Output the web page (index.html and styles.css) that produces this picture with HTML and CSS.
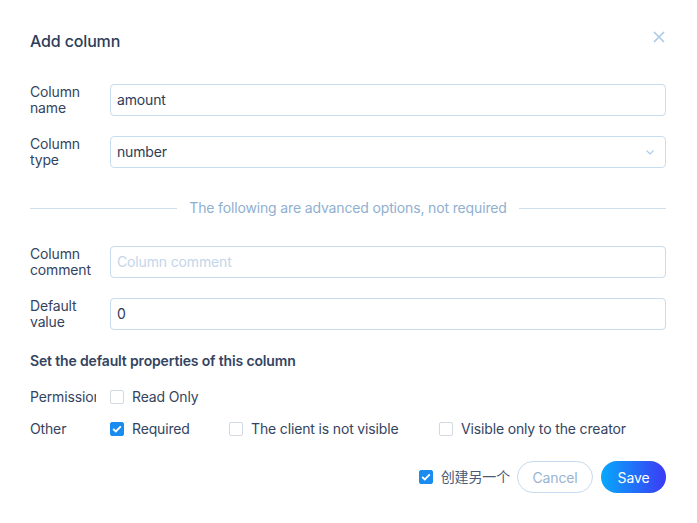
FILE: index.html
```html
<!DOCTYPE html>
<html lang="en">
<head>
<meta charset="utf-8">
<title>Add column</title>
<link rel="stylesheet" href="styles.css">
</head>
<body>
<div class="dialog">
  <div class="header">
    <h1 class="title">Add column</h1>
    <svg class="close" width="12" height="12" viewBox="0 0 12 12"><path d="M1 1 L11 11 M11 1 L1 11" stroke="#a9c9e6" stroke-width="1.6" fill="none"/></svg>
  </div>

  <div class="row first">
    <div class="label">Column name</div>
    <div class="input">amount</div>
  </div>
  <div class="row">
    <div class="label">Column type</div>
    <div class="input select">number
      <svg class="chev" width="8" height="5" viewBox="0 0 8 5"><path d="M0.5 0.5 L4 4 L7.5 0.5" stroke="#a9c9e6" stroke-width="1.1" fill="none"/></svg>
    </div>
  </div>

  <div class="divider"><span class="line"></span><span class="divtext">The following are advanced options, not required</span><span class="line"></span></div>

  <div class="row adv">
    <div class="label">Column comment</div>
    <div class="input placeholder">Column comment</div>
  </div>
  <div class="row">
    <div class="label">Default value</div>
    <div class="input">0</div>
  </div>

  <div class="section">Set the default properties of this column</div>

  <div class="crow perm">
    <div class="label single">Permission</div>
    <div class="opts">
      <label class="opt"><span class="box"></span>Read Only</label>
    </div>
  </div>
  <div class="crow">
    <div class="label single">Other</div>
    <div class="opts">
      <label class="opt w1"><span class="box checked"><svg width="10" height="8" viewBox="0 0 10 8"><path d="M1.2 4 L3.8 6.4 L8.8 1.4" stroke="#fff" stroke-width="1.8" fill="none"/></svg></span>Required</label>
      <label class="opt w2"><span class="box"></span>The client is not visible</label>
      <label class="opt"><span class="box"></span>Visible only to the creator</label>
    </div>
  </div>

  <div class="footer">
    <label class="opt again"><span class="box checked"><svg width="10" height="8" viewBox="0 0 10 8"><path d="M1.2 4 L3.8 6.4 L8.8 1.4" stroke="#fff" stroke-width="1.8" fill="none"/></svg></span>创建另一个</label>
    <button class="btn cancel">Cancel</button>
    <button class="btn save">Save</button>
  </div>
</div>
</body>
</html>
```
FILE: styles.css
```css
* { box-sizing: border-box; }
html, body { margin: 0; padding: 0; background: #fff; }
body {
  font-family: Inter, "Noto Sans CJK SC", sans-serif;
  font-size: 14px;
  letter-spacing: -0.15px;
  color: #2d3e5a;
}
.dialog {
  width: 697px;
  height: 523px;
  padding: 29px 31px 0 30px;
  display: flex;
  flex-direction: column;
}
.header {
  display: flex;
  justify-content: space-between;
  align-items: flex-start;
  height: 24px;
}
.title {
  margin: 0;
  font-size: 16px;
  font-weight: 500;
  line-height: 24px;
  color: #2c3d59;
}
.close { margin-top: 2px; margin-right: 1px; }
.row {
  display: flex;
  align-items: center;
  margin-top: 20px;
  height: 32px;
}
.row.first { margin-top: 31px; }
.row.adv { margin-top: 28px; }
.label {
  width: 66px;
  margin-right: 14px;
  line-height: 16px;
  color: #34445f;
  overflow: hidden;
  flex-shrink: 0;
}
.label.single { white-space: nowrap; line-height: 20px; }
.input {
  flex: 1;
  height: 32px;
  border: 1px solid #c9dced;
  border-radius: 4px;
  padding: 0 7px 0 6px;
  line-height: 30px;
  color: #2c3d59;
  position: relative;
}
.input.placeholder { color: #c3d6e9; }
.chev { position: absolute; right: 11px; top: 13px; }
.divider {
  display: flex;
  align-items: center;
  margin-top: 30px;
  height: 20px;
}
.divider .line { flex: 1; height: 1px; background: #cfdeec; }
.divtext { padding: 0 12px; color: #8fb0cf; line-height: 20px; }
.section {
  margin-top: 21px;
  line-height: 20px;
  font-weight: 600;
  color: #34445f;
}
.crow {
  display: flex;
  align-items: center;
  height: 20px;
  margin-top: 12px;
}
.crow.perm { margin-top: 16px; }
.opts { display: flex; align-items: center; }
.opt {
  display: flex;
  align-items: center;
  color: #34445f;
  line-height: 20px;
}
.opt.w1 { width: 119px; }
.opt.w2 { width: 210px; }
.box {
  width: 14px;
  height: 14px;
  border: 1px solid #d3d9e1;
  border-radius: 2px;
  margin-right: 8px;
  display: flex;
  align-items: center;
  justify-content: center;
  background: #fff;
}
.box.checked { background: #1a8cf0; border-color: #1a8cf0; }
.footer {
  margin-top: 22px;
  display: flex;
  justify-content: flex-end;
  align-items: center;
  height: 32px;
}
.again { margin-right: 7px; color: #4a5a74; }
.btn {
  height: 32px;
  border-radius: 16px;
  font-family: inherit;
  font-size: 14px;
  letter-spacing: inherit;
  padding: 0;
}
.cancel {
  width: 76px;
  border: 1px solid #c6dbef;
  background: #fff;
  color: #9ab4cf;
  margin-right: 8px;
}
.save {
  width: 65px;
  border: none;
  color: #fff;
  background: linear-gradient(90deg, #07a9fc 0%, #3b3af5 100%);
}
```
